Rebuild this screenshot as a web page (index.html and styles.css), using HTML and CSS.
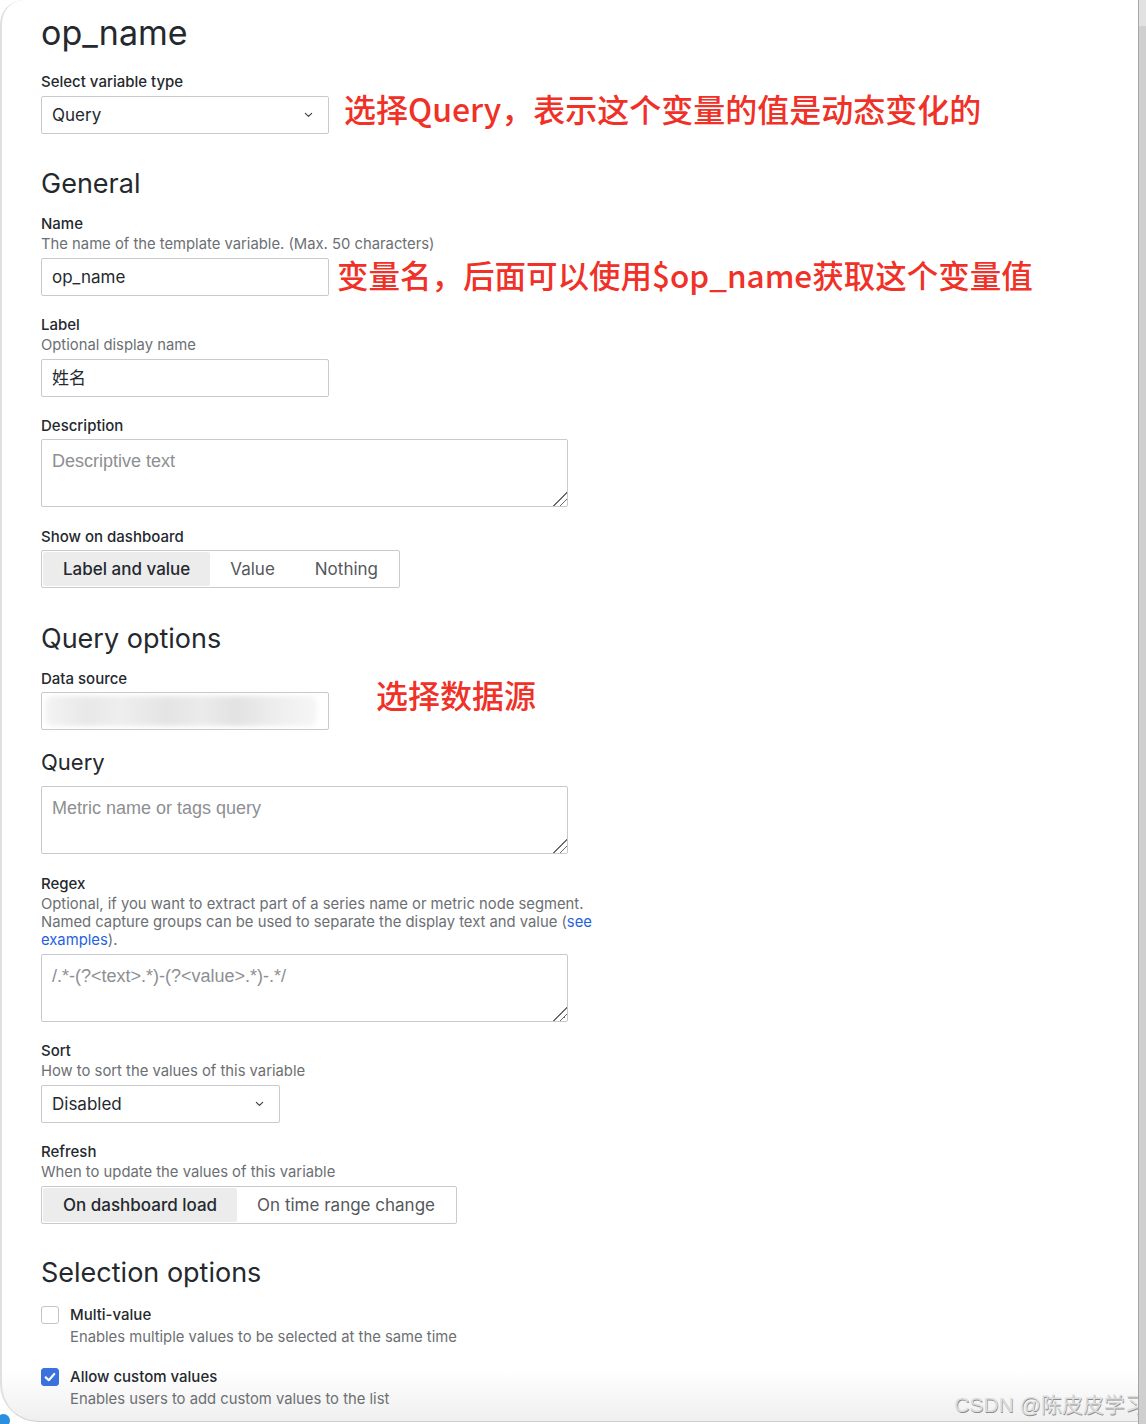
FILE: index.html
```html
<!DOCTYPE html>
<html lang="zh-CN">
<head>
<meta charset="utf-8">
<title>op_name</title>
<link rel="stylesheet" href="styles.css">
</head>
<body>
<div class="frame">
  <main class="panel">
    <h1 class="title">op_name</h1>

    <section class="field">
      <div class="label">Select variable type</div>
      <div class="ctl-row">
        <div class="select select-type">
          <span>Query</span>
          <svg class="chev" viewBox="0 0 10 6"><path d="M1.5 1.2 5 4.6 8.5 1.2"/></svg>
        </div>
        <span class="note note-type">选择Query，表示这个变量的值是动态变化的</span>
      </div>
    </section>

    <h2 class="section section-first">General</h2>

    <section class="field">
      <div class="label">Name</div>
      <div class="desc">The name of the template variable. (Max. 50 characters)</div>
      <div class="ctl-row after-desc">
        <div class="input">op_name</div>
        <span class="note note-name">变量名，后面可以使用$op_name获取这个变量值</span>
      </div>
    </section>

    <section class="field">
      <div class="label">Label</div>
      <div class="desc">Optional display name</div>
      <div class="ctl-row after-desc">
        <div class="input">姓名</div>
      </div>
    </section>

    <section class="field">
      <div class="label">Description</div>
      <div class="ctl-row">
        <textarea class="textarea" placeholder="Descriptive text"></textarea>
      </div>
    </section>

    <section class="field show-field">
      <div class="label">Show on dashboard</div>
      <div class="ctl-row">
        <div class="radio-group">
          <span class="seg active">Label and value</span>
          <span class="seg">Value</span>
          <span class="seg">Nothing</span>
        </div>
      </div>
    </section>

    <h2 class="section">Query options</h2>

    <section class="field ds-field">
      <div class="ds-col">
        <div class="label">Data source</div>
        <div class="ctl-row">
          <div class="input ds-box"><div class="blur"></div></div>
        </div>
      </div>
      <span class="note note-ds">选择数据源</span>
    </section>

    <section class="field query-field">
      <h3 class="subsection">Query</h3>
      <textarea class="textarea" placeholder="Metric name or tags query"></textarea>
    </section>

    <section class="field regex-field">
      <div class="label">Regex</div>
      <div class="desc">Optional, if you want to extract part of a series name or metric node segment.<br>Named capture groups can be used to separate the display text and value (<a class="link" href="#">see<br>examples</a>).</div>
      <div class="ctl-row after-desc">
        <textarea class="textarea" placeholder="/.*-(?&lt;text&gt;.*)-(?&lt;value&gt;.*)-.*/"></textarea>
      </div>
    </section>

    <section class="field">
      <div class="label">Sort</div>
      <div class="desc">How to sort the values of this variable</div>
      <div class="ctl-row after-desc">
        <div class="select select-sort">
          <span>Disabled</span>
          <svg class="chev" viewBox="0 0 10 6"><path d="M1.5 1.2 5 4.6 8.5 1.2"/></svg>
        </div>
      </div>
    </section>

    <section class="field">
      <div class="label">Refresh</div>
      <div class="desc">When to update the values of this variable</div>
      <div class="ctl-row after-desc">
        <div class="radio-group">
          <span class="seg active">On dashboard load</span>
          <span class="seg">On time range change</span>
        </div>
      </div>
    </section>

    <h2 class="section section-sel">Selection options</h2>

    <section class="check-list">
      <div class="check-row">
        <span class="checkbox"></span>
        <div class="check-text">
          <div class="label">Multi-value</div>
          <div class="desc cdesc">Enables multiple values to be selected at the same time</div>
        </div>
      </div>
      <div class="check-row">
        <span class="checkbox checked">
          <svg viewBox="0 0 18 18"><path d="M4.2 9.4 7.6 12.6 13.8 5.6"/></svg>
        </span>
        <div class="check-text">
          <div class="label">Allow custom values</div>
          <div class="desc cdesc">Enables users to add custom values to the list</div>
        </div>
      </div>
    </section>

    <div class="watermark">CSDN @陈皮皮学习</div>
  </main>
  <div class="scrollbar"><div class="scroll-top"></div></div>
  <span class="dot"></span>
</div>
</body>
</html>
```

FILE: styles.css
```css
* { box-sizing: border-box; }

html, body {
  margin: 0;
  padding: 0;
}

body {
  width: 1146px;
  height: 1424px;
  overflow: hidden;
  background: #ffffff;
  font-family: Inter, "Noto Sans", "Noto Sans CJK SC", sans-serif;
  color: #24292e;
}

.frame {
  display: flex;
  height: 1424px;
  position: relative;
}

.panel {
  flex: 1;
  height: 1422px;
  position: relative;
  border-left: 2px solid #e0e0e0;
  border-bottom: 1px solid #cfcfcf;
  border-top-left-radius: 24px;
  border-bottom-left-radius: 38px;
  padding: 13px 0 0 39px;
  background: linear-gradient(to bottom, #ffffff 0, #ffffff 1370px, #efefef 1421px);
}

.scrollbar {
  width: 8px;
  background: #cfcfcf;
  border-left: 1px solid #a6a6a6;
  position: relative;
  z-index: 2;
}

.scroll-top {
  height: 26px;
  background: #e2e2e2;
}

.dot {
  position: absolute;
  left: -3px;
  bottom: -3px;
  width: 13px;
  height: 13px;
  border-radius: 50%;
  background: #2a8fe0;
}

.title {
  margin: 0 0 19px;
  font-size: 34px;
  line-height: 40px;
  font-weight: 400;
  color: #24292e;
}

.section {
  margin: 35px 0 14px;
  font-size: 27px;
  line-height: 32px;
  font-weight: 400;
  color: #24292e;
}

.section.section-first {
  margin-top: 35px;
}

.section.section-sel {
  margin-top: 33px;
}

.subsection {
  margin: 0 0 10px;
  font-size: 22px;
  line-height: 28px;
  font-weight: 400;
  color: #24292e;
}

.field + .field {
  margin-top: 19px;
}

.field + .show-field {
  margin-top: 20px;
}

.field + .query-field {
  margin-top: 18px;
}

.field + .regex-field {
  margin-top: 20px;
}

.label {
  font-size: 15px;
  line-height: 20px;
  font-weight: 500;
  color: #24292e;
}

.desc {
  font-size: 14.8px;
  line-height: 18px;
  margin-top: 1px;
  color: #6c6f73;
}

.link {
  color: #1f62e0;
  text-decoration: none;
}

.ctl-row {
  display: flex;
  align-items: flex-start;
  height: 38px;
  margin-top: 3px;
}

.ctl-row.after-desc {
  margin-top: 5px;
}

.ctl-row:has(.textarea) {
  height: auto;
}

.input,
.select {
  width: 288px;
  height: 38px;
  border: 1px solid #c9c9cf;
  border-radius: 2px;
  background: #fff;
  padding: 0 10px;
  font-size: 17px;
  line-height: 36px;
  color: #24292e;
  flex: none;
}

.select {
  display: flex;
  align-items: center;
  justify-content: space-between;
  padding-right: 15px;
}

.select-type {
  margin-top: 1px;
}

.select-sort {
  width: 239px;
}

.chev {
  width: 9px;
  height: 6px;
  fill: none;
  stroke: #3b3e42;
  stroke-width: 1.3;
  stroke-linecap: round;
  stroke-linejoin: round;
}

.textarea {
  display: block;
  width: 527px;
  height: 68px;
  border: 1px solid #c9c9cf;
  border-radius: 2px;
  padding: 9px 10px;
  margin: 0;
  font-family: "Liberation Sans", Arial, sans-serif;
  font-size: 18px;
  line-height: 24px;
  color: #24292e;
  background: #fff;
  outline: none;
  resize: vertical;
}

.textarea::placeholder {
  color: #8d8f93;
}

.textarea::-webkit-resizer {
  background: linear-gradient(135deg, transparent 0 52%, #6a6a6a 52% 58%, transparent 58% 74%, #6a6a6a 74% 80%, transparent 80%);
}

.radio-group {
  display: inline-flex;
  height: 38px;
  padding: 1px;
  border: 1px solid #c9c9cf;
  border-radius: 2px;
  background: #fff;
}

.seg {
  padding: 0 20px;
  font-size: 17px;
  line-height: 34px;
  color: #55585c;
  border-radius: 2px;
}

.seg.active {
  background: #ececec;
  color: #24292e;
  font-weight: 500;
}

.note {
  font-family: "Noto Sans CJK SC", "Noto Sans", sans-serif;
  font-size: 32px;
  line-height: 38px;
  height: 38px;
  font-weight: 500;
  color: #ef3128;
  white-space: nowrap;
}

.note-type {
  margin-left: 15px;
  margin-top: -6px;
}

.note-name {
  margin-left: 8px;
  margin-top: -3px;
  font-size: 31.5px;
}

.ds-field {
  display: flex;
  align-items: flex-start;
}

.note-ds {
  margin-left: 47px;
  margin-top: 6px;
}

.ds-box {
  position: relative;
  overflow: hidden;
  padding: 0;
}

.blur {
  position: absolute;
  left: 3px;
  top: 3px;
  width: 272px;
  height: 30px;
  border-radius: 8px;
  background: linear-gradient(90deg, #f4f4f4 0%, #e8e8e8 15%, #eeeeee 28%, #e4e4e4 45%, #ebebeb 58%, #e2e2e2 70%, #eeeeee 85%, #f6f6f6 100%);
  filter: blur(2.5px);
}

.check-list {
  display: flex;
  flex-direction: column;
  gap: 21px;
}

.section + .check-list {
  margin-top: 16px;
}

.check-row {
  display: flex;
  align-items: flex-start;
}

.checkbox {
  width: 18px;
  height: 18px;
  margin-top: 1px;
  border: 1px solid #c4c4c8;
  border-radius: 3px;
  background: #fff;
  flex: none;
}

.checkbox.checked {
  background: #3b71dc;
  border-color: #3b71dc;
  display: flex;
}

.checkbox svg {
  width: 16px;
  height: 16px;
  fill: none;
  stroke: #fff;
  stroke-width: 2.4;
  stroke-linecap: round;
  stroke-linejoin: round;
}

.check-text {
  margin-left: 11px;
}

.cdesc {
  margin-top: 3px;
}

.watermark {
  position: absolute;
  right: -8px;
  bottom: 4px;
  font-family: "Liberation Sans", "Noto Sans CJK SC", sans-serif;
  font-size: 21px;
  line-height: 24px;
  color: #dcdcdc;
  text-shadow: 0.6px 0.6px 0.6px #8c8c8c;
  white-space: nowrap;
}
```
